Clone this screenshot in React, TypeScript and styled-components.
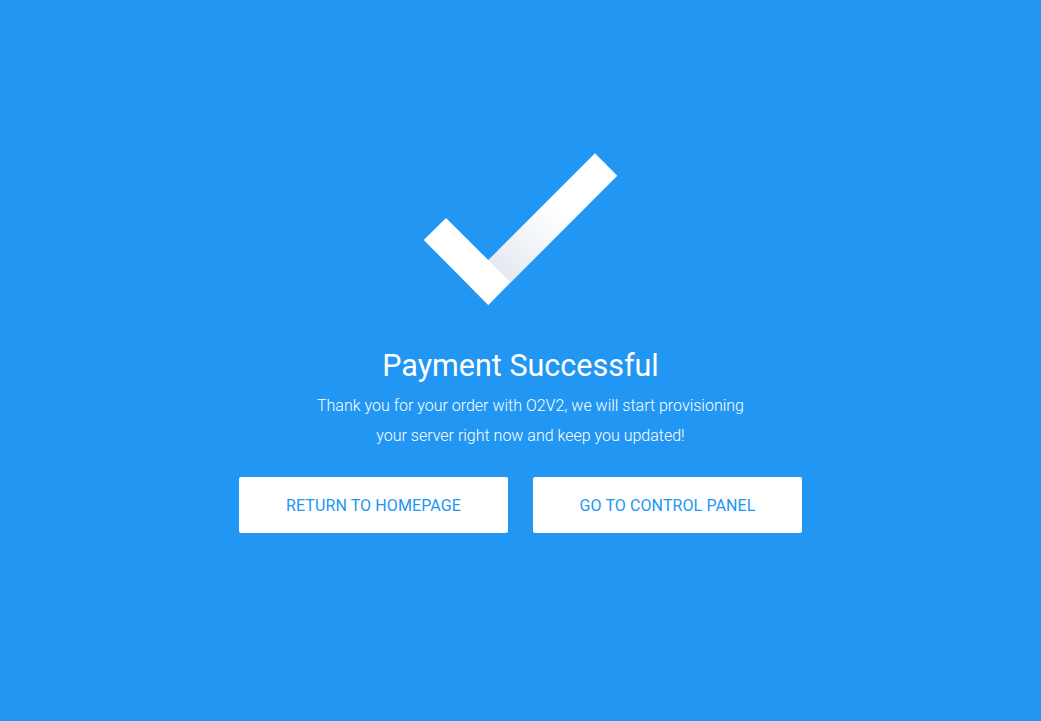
import React from "react";
import styled, { createGlobalStyle } from "styled-components";

const Global = createGlobalStyle`
  html, body { margin: 0; padding: 0; }
  body {
    background: #2196f3;
    font-family: Roboto, "Noto Sans", Arial, sans-serif;
  }
`;

const Page = styled.main`
  min-height: 721px;
  display: flex;
  flex-direction: column;
  align-items: center;
  padding-top: 153px;
  box-sizing: border-box;
  color: #ffffff;
`;

const CheckIcon = styled.svg`
  display: block;
  width: 195px;
  height: 153px;
`;

const Title = styled.h1`
  margin: 40px 0 0;
  font-size: 30.5px;
  line-height: 40px;
  font-weight: 400;
  color: #ffffff;
`;

const Message = styled.p`
  margin: 5px 0 0;
  padding-left: 20px;
  font-size: 16px;
  line-height: 30px;
  font-weight: 300;
  text-align: center;
  color: #ffffff;
`;

const Actions = styled.div`
  display: flex;
  gap: 25px;
  margin-top: 26px;
`;

const ActionButton = styled.a`
  width: 269px;
  height: 56px;
  display: flex;
  align-items: center;
  justify-content: center;
  background: #ffffff;
  border-radius: 2px;
  color: #2196f3;
  font-size: 16px;
  font-weight: 400;
  letter-spacing: 0.1px;
  text-transform: uppercase;
  text-decoration: none;
  cursor: pointer;
`;

export default function App() {
  return (
    <>
      <Global />
      <Page>
        <CheckIcon viewBox="423 153 195 153" aria-hidden="true">
          <defs>
            <linearGradient id="armShade" x1="488" y1="282" x2="560" y2="210" gradientUnits="userSpaceOnUse">
              <stop offset="0" stopColor="#dfe6ef" />
              <stop offset="1" stopColor="#ffffff" />
            </linearGradient>
          </defs>
          <polygon points="488.3,305 617.3,175.7 595,153.3 466,282.3" fill="url(#armShade)" />
          <polygon points="423.7,240 446,218 510,281.7 488.3,305" fill="#ffffff" />
        </CheckIcon>
        <Title>Payment Successful</Title>
        <Message>
          Thank you for your order with O2V2, we will start provisioning
          <br />
          your server right now and keep you updated!
        </Message>
        <Actions>
          <ActionButton>Return to homepage</ActionButton>
          <ActionButton>Go to control panel</ActionButton>
        </Actions>
      </Page>
    </>
  );
}
